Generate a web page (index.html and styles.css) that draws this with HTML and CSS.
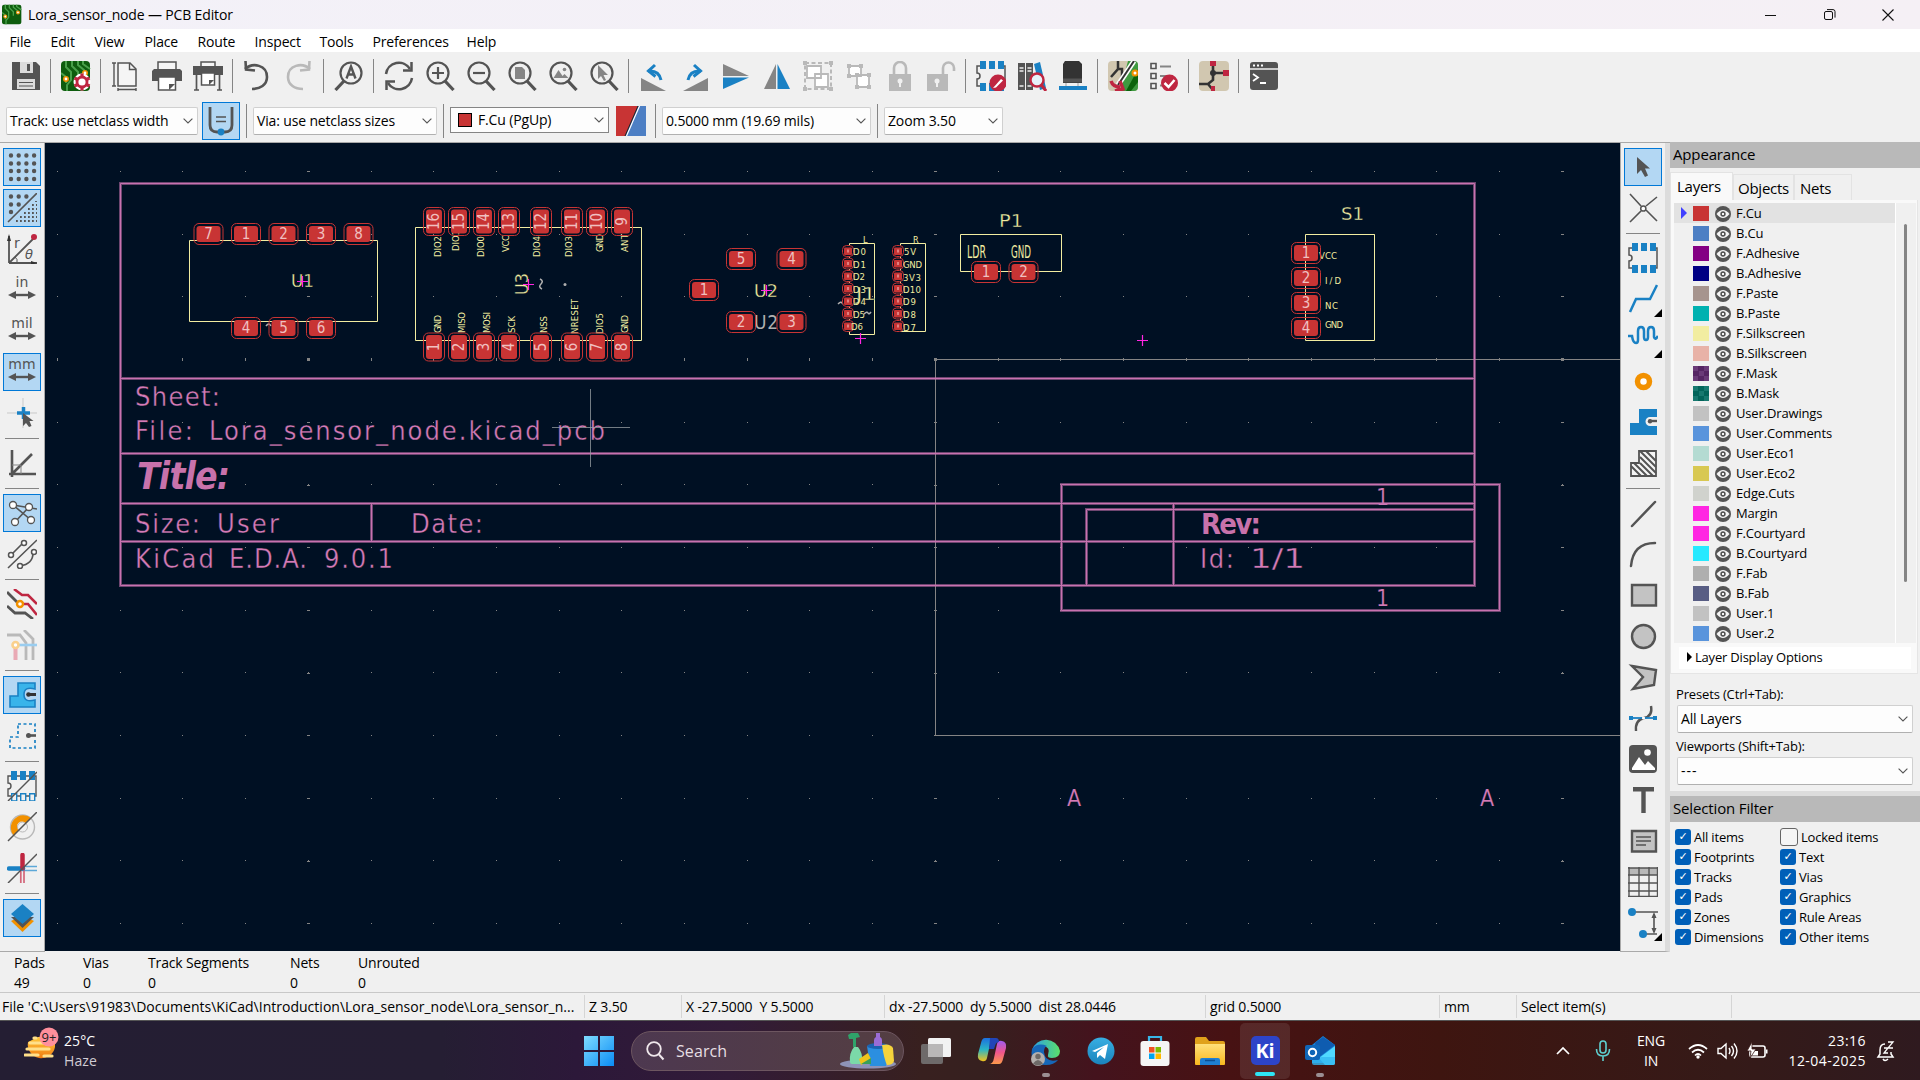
FILE: index.html
```html
<!DOCTYPE html>
<html lang="en">
<head>
<meta charset="utf-8">
<title>Lora_sensor_node — PCB Editor</title>
<link rel="stylesheet" href="styles.css">
</head>
<body>
<svg class="defs" width="0" height="0">
  <defs>
    <linearGradient id="gwin" x1="0" y1="0" x2="1" y2="1"><stop offset="0" stop-color="#7fdcff"/><stop offset="1" stop-color="#0a8cf5"/></linearGradient>
    <linearGradient id="gcop1" x1="0" y1="0" x2="0" y2="1"><stop offset="0" stop-color="#1c6fe0"/><stop offset=".5" stop-color="#2bb6c4"/><stop offset="1" stop-color="#f3c21b"/></linearGradient>
    <linearGradient id="gcop2" x1="0" y1="0" x2="0" y2="1"><stop offset="0" stop-color="#a05bf0"/><stop offset=".5" stop-color="#f0568c"/><stop offset="1" stop-color="#fb9a4b"/></linearGradient>
    <linearGradient id="gedge" x1="0" y1="0" x2="1" y2="0"><stop offset="0" stop-color="#2b9fe8"/><stop offset="1" stop-color="#5be06a"/></linearGradient>
    <linearGradient id="gtel" x1="0" y1="0" x2="0" y2="1"><stop offset="0" stop-color="#37aee2"/><stop offset="1" stop-color="#1b84bd"/></linearGradient>
    <linearGradient id="gfold" x1="0" y1="0" x2="0" y2="1"><stop offset="0" stop-color="#ffe07a"/><stop offset="1" stop-color="#f9b81e"/></linearGradient>
    <linearGradient id="ghaze" x1="0" y1="0" x2="0" y2="1"><stop offset="0" stop-color="#ffc93c"/><stop offset="1" stop-color="#f07c12"/></linearGradient>
    <symbol id="eye" viewBox="0 0 16 16"><circle cx="8" cy="8" r="8" fill="#545454"/><path d="M1.500 8Q8 0 14.500 8Q8 16 1.500 8Z" fill="#f4f4f4"/><circle cx="8" cy="8" r="2.700" fill="#545454"/><rect x="7" y="7" width="2" height="2" fill="#f4f4f4"/></symbol>
    <symbol id="chev" viewBox="0 0 10 6"><path d="M.6.6 5 5 9.400.6" fill="none" stroke="#555" stroke-width="1.1"/></symbol>
    <symbol id="board" viewBox="0 0 30 30"><rect width="29" height="30" rx="4" fill="#0e5c0e"/><path d="M5 0v6l5 5v8l-4 5v6M11 0v5l6 6v6M17 0v4l6 5v4M0 12l5 4v6M22 0v3l7 5" fill="none" stroke="#49a04a" stroke-width="2"/><circle cx="5" cy="18" r="2.2" fill="#fff" stroke="#f29100" stroke-width="1.6"/><circle cx="24" cy="12" r="2.2" fill="#fff" stroke="#f29100" stroke-width="1.6"/></symbol>
    <symbol id="lens" viewBox="0 0 30 30"><circle cx="13" cy="12" r="10.500" fill="none" stroke="#545454" stroke-width="2.200"/><path d="M20 20l8.500 9" stroke="#545454" stroke-width="3.200"/></symbol>
    <symbol id="dip" viewBox="0 0 30 30"><path d="M4 5H1v7a3 3 0 0 1 0 6v7h3M27 5h2v20h-2" fill="none" stroke="#545454" stroke-width="1.500"/><path d="M4 0h6v8H4zM13 0h6v8h-6zM22 0h6v8h-6zM4 22h6v8H4zM13 22h6v8h-6zM22 22h6v8h-6z" fill="#1a81c4"/></symbol>
    <symbol id="arrows" viewBox="0 0 30 8"><path d="M5 4h20" stroke="#545454" stroke-width="2.400"/><path d="M1 4l8-4v8zM29 4l-8-4v8z" fill="#545454"/></symbol>
    <symbol id="padh" viewBox="-16 -12 32 24" overflow="visible"><rect x="-14.500" y="-10.500" width="29" height="21" rx="5" fill="none" stroke="#c83434"/><rect x="-12" y="-8" width="24" height="16" rx="3" fill="#c83434"/></symbol>
    <symbol id="padv" viewBox="-12 -16 24 32" overflow="visible"><rect x="-10.500" y="-14" width="21" height="28" rx="5" fill="none" stroke="#c83434"/><rect x="-8" y="-12" width="16" height="24" rx="3" fill="#c83434"/></symbol>
    <symbol id="pads" viewBox="-6 -6 12 12" overflow="visible"><rect x="-5.500" y="-5.500" width="11" height="11" rx="4" fill="#001023" stroke="#c83434"/><rect x="-4" y="-3.500" width="8" height="7.500" rx="1" fill="#c83434"/><rect x="-1" y="-1.500" width="2" height="3" fill="#e08080"/></symbol>
    <symbol id="cross" viewBox="-6 -6 12 12" overflow="visible"><path d="M-5.500 0h11M0-5.500v11" stroke="#ff26e2" stroke-width="1.200"/></symbol>
  </defs>
</svg>

<header class="titlebar">
  <svg class="appicon" viewBox="0 0 30 30" width="20" height="21"><use href="#board" width="30" height="30"/></svg>
  <span class="apptitle">Lora_sensor_node — PCB Editor</span>
  <div class="winbtns">
    <svg width="12" height="12"><path d="M0 6.500h11" stroke="#111"/></svg>
    <svg width="12" height="12"><rect x=".5" y="2.500" width="8" height="8" rx="1.500" fill="none" stroke="#111"/><path d="M3 .6h6a2 2 0 0 1 2 2v6" fill="none" stroke="#111"/></svg>
    <svg width="12" height="12"><path d="M.5.5l11 11M11.500.5l-11 11" stroke="#111" stroke-width="1.100"/></svg>
  </div>
</header>
<nav class="menubar"><span>File</span><span>Edit</span><span>View</span><span>Place</span><span>Route</span><span>Inspect</span><span>Tools</span><span>Preferences</span><span>Help</span></nav>

<div class="toolbar main">
  <b><svg viewBox="0 0 30 30"><path d="M1 1h24l4 4v24H1z" fill="#545454"/><path d="M9 1h13v11H9z" fill="#dcdcdc"/><path d="M16 3h3v7h-3z" fill="#545454"/><path d="M6 18h18v10H6z" fill="#dcdcdc"/><path d="M8 21.500h14M8 25h14" stroke="#545454" stroke-width="1.200"/></svg></b><i></i>
  <b><svg viewBox="0 0 30 30"><use href="#board"/><circle cx="21" cy="21" r="8.500" fill="#fff"/><circle cx="21" cy="21" r="5" fill="#fff" stroke="#bf2641" stroke-width="2.800"/><path d="M21 12.500v3M21 26.500v3M13.500 17l3 1.500M25.500 23.500l3 1.500M13.500 25l3-1.500M25.500 18.500l3-1.500" stroke="#bf2641" stroke-width="3.200"/></svg></b><i></i>
  <b><svg viewBox="0 0 30 30"><path d="M7 2h12l6 6v17H7z" fill="#f5f5f5" stroke="#545454" stroke-width="1.500"/><path d="M18.500 2v6.500H25M1 2h4M1 25h4M3 2v23M7 28.500h18M7 27v3M25 27v3" fill="none" stroke="#545454" stroke-width="1.400"/></svg></b>
  <b><svg viewBox="0 0 30 30"><path d="M6 1h18v8H6z" fill="#f5f5f5" stroke="#545454" stroke-width="1.500"/><path d="M2 8h26l2 2v10h-6v-4H6v4H0V10z" fill="#545454"/><path d="M6.500 16h17v13h-17z" fill="#fff" stroke="#545454" stroke-width="1.500"/><path d="M17 29v-6h6z" fill="#545454"/></svg></b>
  <b><svg viewBox="0 0 30 30"><path d="M8 1h14v5H8z" fill="#f5f5f5" stroke="#545454" stroke-width="1.500"/><path d="M0 5h30v9H0z" fill="#545454"/><path d="M3.500 14v15M26.500 14v15M1 29h5M24 29h5" stroke="#545454" stroke-width="1.700"/><path d="M8.500 12h13v12h-13z" fill="#fff" stroke="#545454" stroke-width="1.500"/><path d="M16 24v-5h5z" fill="#545454"/></svg></b><i></i>
  <b><svg viewBox="0 0 30 30"><path d="M2 8C10 1 24 4 24 16 24 24 17 28 9 28" fill="none" stroke="#545454" stroke-width="2.600"/><path d="M2.500 0l.5 8.500 9 1" fill="none" stroke="#545454" stroke-width="2.600"/></svg></b>
  <b><svg viewBox="0 0 30 30"><g transform="matrix(-1 0 0 1 28 0)"><path d="M2 8C10 1 24 4 24 16 24 24 17 28 9 28" fill="none" stroke="#b9b9b9" stroke-width="2.600"/><path d="M2.500 0l.5 8.500 9 1" fill="none" stroke="#b9b9b9" stroke-width="2.600"/></g></svg></b><i></i>
  <b><svg viewBox="0 0 30 30"><g transform="matrix(-1 0 0 1 30 0)"><use href="#lens"/></g><path d="M12.500 17.500l4.500-12 4.500 12M14 13.500h6" fill="none" stroke="#545454" stroke-width="2.400"/></svg></b><i></i>
  <b><svg viewBox="0 0 30 30"><path d="M2 13A13 13 0 0 1 26 8M28 17A13 13 0 0 1 4 22" fill="none" stroke="#545454" stroke-width="2.500"/><path d="M27.500 1v8.500h-8.500M2.500 29v-8.500h8.500" fill="none" stroke="#545454" stroke-width="2.500"/></svg></b>
  <b><svg viewBox="0 0 30 30"><use href="#lens"/><path d="M7 12h12M13 6v12" stroke="#545454" stroke-width="2.200"/></svg></b>
  <b><svg viewBox="0 0 30 30"><use href="#lens"/><path d="M7 12h12" stroke="#545454" stroke-width="2.200"/></svg></b>
  <b><svg viewBox="0 0 30 30"><use href="#lens"/><path d="M8 6h7l3 3v9H8z" fill="#858585"/></svg></b>
  <b><svg viewBox="0 0 30 30"><use href="#lens"/><path d="M5.500 17l5-8 4 6 2-2 4 4z" fill="#858585"/><circle cx="16.500" cy="8.500" r="1.800" fill="#858585"/></svg></b>
  <b><svg viewBox="0 0 30 30"><use href="#lens"/><path d="M9 4v14l3-3 3 5 2-1-2.500-5H19z" fill="#858585"/></svg></b><i></i>
  <b><svg viewBox="0 0 30 30"><path d="M2 17v13h25z" fill="#858585"/><path d="M9 10q11-1 13 9" fill="none" stroke="#1a81c4" stroke-width="3"/><path d="M16 4L9.500 10l7 5.500" fill="none" stroke="#1a81c4" stroke-width="3"/></svg></b>
  <b><svg viewBox="0 0 30 30"><path d="M28 17v13H3z" fill="#858585"/><path d="M21 10q-11-1-13 9" fill="none" stroke="#1a81c4" stroke-width="3"/><path d="M14 4l6.500 6-7 5.500" fill="none" stroke="#1a81c4" stroke-width="3"/></svg></b>
  <b><svg viewBox="0 0 30 30"><path d="M2 3l26 12H2z" fill="#858585"/><path d="M2 28l26-11.500H2z" fill="#1a81c4"/></svg></b>
  <b><svg viewBox="0 0 30 30"><path d="M2 28L14 3v25z" fill="#858585"/><path d="M28 28L15.500 3v25z" fill="#1a81c4"/></svg></b>
  <b><svg viewBox="0 0 30 30"><path d="M2 2h26v26H2z" fill="none" stroke="#b9b9b9" stroke-width="2" stroke-dasharray="4 2.500"/><path d="M4 5h14v12H4zM12 13h13v13H12z" fill="#fff" stroke="#b9b9b9" stroke-width="1.800"/><path d="M0 0h4v4H0zM26 0h4v4h-4zM0 26h4v4H0zM26 26h4v4h-4z" fill="#b9b9b9"/></svg></b>
  <b><svg viewBox="0 0 30 30"><path d="M5 5h12v10H5zM13 14h12v12H13z" fill="#fff" stroke="#b9b9b9" stroke-width="1.800"/><path d="M3 3h4v4H3zM15 3h4v4h-4zM3 13h4v4H3zM11 12h4v4h-4zM23 12h4v4h-4zM11 24h4v4h-4zM23 24h4v4h-4z" fill="#b9b9b9"/></svg></b>
  <b><svg viewBox="0 0 30 30"><path d="M9 14V7a6 6 0 0 1 12 0v7" fill="none" stroke="#b9b9b9" stroke-width="2.600"/><path d="M4 13h22v17H4z" fill="#b9b9b9"/><circle cx="15" cy="20" r="2.500" fill="#f0f0f0"/><path d="M14 21h2v5h-2z" fill="#f0f0f0"/></svg></b>
  <b><svg viewBox="0 0 30 30"><path d="M17 14V7a5.500 5.500 0 0 1 11 0v3" fill="none" stroke="#b9b9b9" stroke-width="2.600"/><path d="M1 13h21v17H1z" fill="#b9b9b9"/><circle cx="11" cy="20" r="2.500" fill="#f0f0f0"/><path d="M10 21h2v5h-2z" fill="#f0f0f0"/></svg></b><i></i>
  <b><svg viewBox="0 0 30 30"><use href="#dip"/><circle cx="22" cy="22" r="8.500" fill="#bf2641"/><path d="M17 27l8-9 2 1.500-7 7z" fill="#fff"/></svg></b>
  <b><svg viewBox="0 0 30 30"><path d="M1 2h7v27H1zM9 2h7v27H9z" fill="#545454"/><path d="M2.500 7h4M2.500 10h4M10.500 7h4M10.500 10h4M2.500 25h4M10.500 25h4" stroke="#eee" stroke-width="1.300"/><path d="M17 3l6-2 6 26-6 2z" fill="#1a81c4"/><circle cx="20" cy="19" r="6.500" fill="#e6f2fa" stroke="#bf2641" stroke-width="2.400"/><path d="M24.500 24l4.500 6" stroke="#bf2641" stroke-width="3"/></svg></b>
  <b><svg viewBox="0 0 30 30"><path d="M7 0h14l3 3v19H5V3z" fill="#333"/><path d="M8 22v3M20 22v3" stroke="#bbb" stroke-width="1.500"/><path d="M5 17.500h19v4H5z" fill="#545454"/><path d="M1 25h28v4H1z" fill="#1a81c4"/></svg></b><i></i>
  <b><svg viewBox="0 0 30 30"><rect width="30" height="30" rx="4" fill="#d1c7b0"/><path d="M20 0h6a4 4 0 0 1 4 4v22a4 4 0 0 1-4 4H12z" fill="#3f9a40"/><path d="M30 8L18 30h5l7-9z" fill="#0b630b"/><path d="M10 0v8l-7 8M10 8h4v8" fill="none" stroke="#333" stroke-width="2.500"/><path d="M26 0L10 24" stroke="#fff" stroke-width="5"/><path d="M26 0L10 24" stroke="#333" stroke-width="2"/><path d="M3 20q2 6 9 6M7 30l8-2-3-8" fill="none" stroke="#bf2641" stroke-width="3.500"/><circle cx="27" cy="12" r="2.500" fill="#fff" stroke="#f29100" stroke-width="2"/></svg></b>
  <b><svg viewBox="0 0 30 30"><path d="M2 2.500h5v5H2zM2 12.500h5v5H2zM2 22.500h5v5H2z" fill="none" stroke="#545454" stroke-width="1.600"/><path d="M11 5.500h11M11 15h9M11 24.500h4" stroke="#858585" stroke-width="2"/><circle cx="20.500" cy="22" r="8.500" fill="#bf2641"/><path d="M15.500 22l4 4 6-7" fill="none" stroke="#fff" stroke-width="2.500"/></svg></b><i></i>
  <b><svg viewBox="0 0 30 30"><rect width="30" height="30" rx="4" fill="#d1c7b0"/><path d="M14 4v8M14 12h10M14 12v7l-5 4H0M9 23l5 6" fill="none" stroke="#333" stroke-width="2.600"/><circle cx="14" cy="12" r="3" fill="#333"/><path d="M11 0h6v5h-6zM24 9h6v6h-6zM12 25h4v5h-4z" fill="#bf2641"/></svg></b><i></i>
  <b><svg viewBox="0 0 30 30"><rect x="1" y="1" width="28" height="28" rx="3" fill="#545454"/><path d="M1 8h28" stroke="#f0f0f0" stroke-width="1.500"/><path d="M4 4.500h2M8 4.500h2M12 4.500h2" stroke="#fff" stroke-width="2"/><path d="M4 13l5 3.500-5 3.500M11 22h6" fill="none" stroke="#fff" stroke-width="1.800"/></svg></b>
</div>

<div class="toolbar aux">
  <div class="combo" style="width:192px">Track: use netclass width<svg><use href="#chev"/></svg></div>
  <div class="toggle"><svg width="30" height="30" viewBox="0 0 30 30"><path d="M4 1v18q0 7 7 7h8q7 0 7-7V1" fill="none" stroke="#545454" stroke-width="2.800"/><path d="M10 11h10M10 15.500h10" stroke="#545454" stroke-width="1.300"/><circle cx="15" cy="26" r="3.400" fill="#1a81c4"/></svg></div><i></i>
  <div class="combo" style="width:184px">Via: use netclass sizes<svg><use href="#chev"/></svg></div><i></i>
  <div class="combo layer" style="width:159px"><span class="sw"></span>F.Cu (PgUp)<svg><use href="#chev"/></svg></div>
  <svg class="pair" width="30" height="30"><path d="M0 0h30v30H0z" fill="#4d7fc4"/><path d="M0 0h22L9 30H0z" fill="#c83434"/><path d="M23.500 0L10.500 30" stroke="#fff" stroke-width="1.200"/><path d="M22 0L9 30" stroke="#222" stroke-width="1"/></svg><i></i>
  <div class="combo" style="width:209px">0.5000 mm (19.69 mils)<svg><use href="#chev"/></svg></div><i></i>
  <div class="combo" style="width:119px">Zoom 3.50<svg><use href="#chev"/></svg></div>
</div>

<main class="work">
  <div class="vbar left">
    <b class="on"><svg viewBox="0 0 30 30"><path d="M4 3.500h24M4 11.500h24M4 19h24M4 27h24" stroke="#545454" stroke-width="4.400" stroke-dasharray="0 7.700" stroke-linecap="round"/></svg></b>
    <b class="on"><svg viewBox="0 0 30 30"><path d="M4 3.500h18M4 11.500h9M4 19h1" stroke="#545454" stroke-width="4.400" stroke-dasharray="0 7.700" stroke-linecap="round"/><path d="M1 29L30 0" stroke="#545454" stroke-width="1.600"/><path d="M29 8v1M25 12h5M21 16h9M17 20h13M13 24h17M9 28h21" stroke="#545454" stroke-width="1.800" stroke-dasharray="1.800 2.200"/></svg></b>
    <b><svg viewBox="0 0 30 30"><path d="M2 29V2M2 29h28M2 29L27 4" fill="none" stroke="#545454" stroke-width="1.800"/><path d="M0 7l2-7 2 7zM24 27l6 2-6 2z" fill="#333"/><circle cx="27" cy="3" r="3" fill="#bf2641"/><text x="7" y="14" class="ic" font-size="14">r</text><text x="18" y="25" class="ic" font-size="13" font-style="italic">θ</text><path d="M8 23q3 2 2 6" fill="none" stroke="#545454"/></svg></b>
    <b><svg viewBox="0 0 30 30"><text x="15" y="12" text-anchor="middle" class="ic" font-size="14">in</text><use href="#arrows" y="16" width="30" height="8"/></svg></b>
    <b><svg viewBox="0 0 30 30"><text x="15" y="12" text-anchor="middle" class="ic" font-size="14">mil</text><use href="#arrows" y="16" width="30" height="8"/></svg></b>
    <b class="on"><svg viewBox="0 0 30 30"><text x="15" y="12" text-anchor="middle" class="ic" font-size="14">mm</text><use href="#arrows" y="16" width="30" height="8"/></svg></b>
    <b><svg viewBox="0 0 30 30"><path d="M0 15h30M16 0v30" stroke="#c9c9c9"/><path d="M10 15h13M16.500 9v12" stroke="#1a81c4" stroke-width="3.500"/><path d="M16 15v13l3-3 3 4 2.500-1-2-5h4z" fill="#545454"/></svg></b><i></i>
    <b><svg viewBox="0 0 30 30"><path d="M5 2v27M2 26h27M5 26L25 6" stroke="#545454" stroke-width="2.600"/><path d="M5 17h9M14 17v9" stroke="#858585"/></svg></b><i></i>
    <b class="on"><svg viewBox="0 0 30 30"><path d="M6 7l24 4M6 7l18 15M22 9L8 24" stroke="#545454" stroke-width="1.600"/><g fill="#fff" stroke="#545454" stroke-width="1.300"><circle cx="6" cy="7" r="3.500"/><circle cx="22" cy="9" r="3.500"/><circle cx="8" cy="24" r="3.500"/><circle cx="24" cy="22" r="3.500"/></g></svg></b>
    <b><svg viewBox="0 0 30 30"><path d="M1 29L30 1M4 16L17 3M13 27q13-2 13-13" fill="none" stroke="#545454" stroke-width="1.600"/><g fill="#fff" stroke="#545454" stroke-width="1.500"><circle cx="4" cy="16" r="2.500"/><circle cx="17" cy="4" r="2.500"/><circle cx="13" cy="27" r="2.500"/><circle cx="27" cy="13" r="2.500"/></g></svg></b><i></i>
    <b><svg viewBox="0 0 30 30"><path d="M0 3l12 12M0 17l8 7h10l8 6" fill="none" stroke="#545454" stroke-width="2.800"/><path d="M7 0l8 6h6l9 9M14 15h7l9 11" fill="none" stroke="#bf2641" stroke-width="2.600"/><circle cx="13" cy="15" r="3" fill="#fff" stroke="#f29100" stroke-width="2.400"/></svg></b>
    <b><svg viewBox="0 0 30 30"><path d="M0 5h13l6 8v17M17 0l9 9v21" fill="none" stroke="#b9b9b9" stroke-width="2.800"/><path d="M10 15h20" stroke="#99cdf0" stroke-width="2.600"/><path d="M8.500 18v12" stroke="#e9a9b4" stroke-width="4"/><circle cx="8.500" cy="15" r="3" fill="#fff" stroke="#fad08c" stroke-width="2.600"/></svg></b><i></i>
    <b class="on"><svg viewBox="0 0 30 30"><path d="M11 3h17v6q-11-3-11 5.500T28 20v7H3V16h8z" fill="#39b4ea" stroke="#1a81c4" stroke-width="1.600"/><path d="M21 14.500h8" stroke="#333" stroke-width="3"/><circle cx="21.500" cy="14.500" r="2.300" fill="#333"/></svg></b>
    <b><svg viewBox="0 0 30 30"><path d="M11 3h17v24H3V16h8z" fill="none" stroke="#1a81c4" stroke-width="1.700" stroke-dasharray="3 2.500"/><path d="M20 11h9v8h-9z" fill="#f0f0f0"/><path d="M21 14.500h8" stroke="#545454" stroke-width="2.600"/><circle cx="21.500" cy="14.500" r="2.500" fill="#545454"/></svg></b><i></i>
    <b><svg viewBox="0 0 30 30"><path d="M4 5H1v7a3 3 0 0 1 0 6v7h28V5H4" fill="none" stroke="#545454" stroke-width="1.400"/><path d="M4 0h6v9H4zM13 0h6v9h-6zM22 0h6v9h-6z" fill="#1a81c4"/><path d="M4.700 22.700h5V30h-5zM13.700 22.700h5V30h-5zM22.700 22.700h5V30h-5z" fill="#f0f0f0" stroke="#1a81c4" stroke-width="1.400"/><path d="M1 30L30 1" stroke="#545454" stroke-width="1.500"/></svg></b>
    <b><svg viewBox="0 0 30 30"><circle cx="15.500" cy="15" r="12" fill="none" stroke="#b9b9b9" stroke-width="1.400"/><circle cx="15.500" cy="15" r="5" fill="none" stroke="#b9b9b9"/><path d="M6.700 23.800a12.500 12.500 0 0 1 17.600-17.600L19 11.500a5 5 0 1 0-7 7z" fill="#f29100"/><path d="M1 29L30 0" stroke="#545454" stroke-width="1.500"/></svg></b>
    <b><svg viewBox="0 0 30 30"><path d="M15 13.500h15M15 17.500h15" stroke="#5ca8d8" stroke-width="1.700"/><path d="M13.800 15v15M17 15v15" stroke="#d3667a" stroke-width="1.700"/><path d="M2 15.500h14" stroke="#1a81c4" stroke-width="4.500" stroke-linecap="round"/><path d="M15.500 2v13" stroke="#bf2641" stroke-width="4.500" stroke-linecap="round"/><path d="M1 30L30 1" stroke="#545454" stroke-width="1.500"/></svg></b><i></i>
    <b class="on"><svg viewBox="0 0 30 30"><path d="M4 18l11.500 11L27 18l-4-2H8z" fill="#f29100"/><path d="M4 14l11.500 11L27 14z" fill="#545454"/><path d="M15.500 1L27 11 15.500 21 4 11z" fill="#1a81c4"/></svg></b>
  </div>

  <svg class="canvas" width="1575" height="808" viewBox="45 143 1575 808">
    <defs>
      <path id="frame" d="M120.500 183.500h1354v402h-1354zM120.500 378.500h1354M120.500 453.500h1354M120.500 503.500h1354M120.500 541.500h1354M371.500 503.500v38M1173.500 503.500v82M1061.500 484.500h438v126h-438zM1086.500 585.500v-76h388"/>
      <path id="gridrow" d="M57 0H1620"/>
    </defs>
    <g class="grid">
      <use href="#gridrow" y="171.500"/><use href="#gridrow" y="234.500"/><use href="#gridrow" y="296.500"/><use href="#gridrow" y="422.500"/><use href="#gridrow" y="484.500"/><use href="#gridrow" y="547.500"/><use href="#gridrow" y="610.500"/><use href="#gridrow" y="672.500"/><use href="#gridrow" y="735.500"/><use href="#gridrow" y="798.500"/><use href="#gridrow" y="860.500"/><use href="#gridrow" y="923.500"/>
      <use href="#gridrow" y="359.500" stroke-width="3"/>
      <path d="M308.500 171V950M935.500 171V950M1562.500 171V950" stroke-width="3"/>
    </g>
    <path d="M307 358h3v3h-3zM934 358h3v3h-3zM1561 358h3v3h-3z" fill="#848484"/>
    <path d="M1620 359.500H935.500v376H1620" class="page"/>

    <g class="ws">
      <text x="135" y="406" textLength="85">Sheet:</text>
      <text x="135" y="440" textLength="58">File:</text><text x="209" y="440" textLength="396">Lora_sensor_node.kicad_pcb</text>
      <text x="137" y="489" textLength="93" class="title">Title:</text>
      <text x="135" y="533" textLength="65">Size:</text><text x="217" y="533" textLength="62">User</text>
      <text x="411" y="533" textLength="72">Date:</text>
      <text x="135" y="568" textLength="79">KiCad</text><text x="229" y="568" textLength="78">E.D.A.</text><text x="324" y="568" textLength="69">9.0.1</text>
      <text x="1201" y="534" textLength="60" class="rev">Rev:</text>
      <text x="1200" y="568" textLength="34">Id:</text><text x="1250" y="568" textLength="55" lengthAdjust="spacingAndGlyphs">1/1</text>
      <text x="1376" y="505" class="sm">1</text><text x="1376" y="606" class="sm">1</text>
      <text x="1067" y="806" class="sm">A</text><text x="1480" y="806" class="sm">A</text>
    </g>
    <use href="#frame" class="fr halo"/><use href="#frame" class="fr"/>

    <path class="silk" d="M189.500 240.500h188v81h-188zM415.500 227.500h226v113h-226zM849.500 243.500h25v91h-25zM900.500 243.500h25v88h-25zM960.500 234.500h101v37h-101zM1305.500 234.500h69v106h-69z"/>

    <g class="lbl">
      <g transform="rotate(-90)">
        <text x="-257" y="441" textLength="21">DIO2</text><text x="-251" y="459" textLength="21">DIO1</text><text x="-257" y="484" textLength="21">DIO0</text><text x="-252" y="509" textLength="17">VCC</text><text x="-257" y="540" textLength="21">DIO4</text><text x="-257" y="572" textLength="21">DIO3</text><text x="-252" y="603" textLength="18">GND</text><text x="-252" y="628" textLength="18">ANT</text>
        <text x="-333" y="441" textLength="18">GND</text><text x="-333" y="465" textLength="21">MISO</text><text x="-333" y="490" textLength="21">MOSI</text><text x="-333" y="515" textLength="17">SCK</text><text x="-333" y="547" textLength="17">NSS</text><text x="-334" y="578" textLength="35">NRESET</text><text x="-334" y="603" textLength="21">DIO5</text><text x="-333" y="628" textLength="18">GND</text>
      </g>
      <text x="967" y="258" textLength="19" lengthAdjust="spacingAndGlyphs" font-size="18">LDR</text><text x="1011" y="258" textLength="20" lengthAdjust="spacingAndGlyphs" font-size="18">GND</text>
      <text x="1319" y="259" textLength="18">VCC</text><text x="1325" y="284" textLength="16">I/D</text><text x="1325" y="309" textLength="13">NC</text><text x="1325" y="328" textLength="18">GND</text>
      <text x="863" y="243" font-size="9">L</text><text x="913" y="243" font-size="9">R</text>
    </g>
    <g class="ref">
      <text x="291" y="286.500" textLength="23" lengthAdjust="spacingAndGlyphs">U1</text>
      <text x="-295" y="528" textLength="22" lengthAdjust="spacingAndGlyphs" transform="rotate(-90)">U3</text>
      <text x="754" y="297" textLength="24" lengthAdjust="spacingAndGlyphs">U2</text>
      <text x="856" y="300" textLength="20" lengthAdjust="spacingAndGlyphs">J1</text>
      <text x="999" y="226.500" textLength="24" lengthAdjust="spacingAndGlyphs">P1</text>
      <text x="1341" y="220" textLength="23" lengthAdjust="spacingAndGlyphs">S1</text>
    </g>
    <g class="fab"><text x="754" y="328.500" textLength="24">U2</text><path d="M266 326q3-4 5 0M838 304q3-3 4-1t3-1M864 314q3-3 4-1t3-1M540 279q4 2 1 5t1 5" fill="none" stroke="#afafaf" stroke-width="1.500"/><circle cx="565" cy="284.500" r="1.500"/></g>

    <g>
      <use href="#padh" x="192.500" y="222" width="32" height="24"/><use href="#padh" x="230" y="222" width="32" height="24"/><use href="#padh" x="267.500" y="222" width="32" height="24"/><use href="#padh" x="305" y="222" width="32" height="24"/><use href="#padh" x="342.500" y="222" width="32" height="24"/>
      <use href="#padh" x="230" y="316" width="32" height="24"/><use href="#padh" x="267.500" y="316" width="32" height="24"/><use href="#padh" x="305" y="316" width="32" height="24"/>
      <use href="#padv" x="422" y="205.500" width="24" height="32"/><use href="#padv" x="447" y="205.500" width="24" height="32"/><use href="#padv" x="472" y="205.500" width="24" height="32"/><use href="#padv" x="497" y="205.500" width="24" height="32"/><use href="#padv" x="529" y="205.500" width="24" height="32"/><use href="#padv" x="560" y="205.500" width="24" height="32"/><use href="#padv" x="585" y="205.500" width="24" height="32"/><use href="#padv" x="610" y="205.500" width="24" height="32"/>
      <use href="#padv" x="422" y="331" width="24" height="32"/><use href="#padv" x="447" y="331" width="24" height="32"/><use href="#padv" x="472" y="331" width="24" height="32"/><use href="#padv" x="497" y="331" width="24" height="32"/><use href="#padv" x="529" y="331" width="24" height="32"/><use href="#padv" x="560" y="331" width="24" height="32"/><use href="#padv" x="585" y="331" width="24" height="32"/><use href="#padv" x="610" y="331" width="24" height="32"/>
      <use href="#padh" x="725" y="247" width="32" height="24"/><use href="#padh" x="775.500" y="247" width="32" height="24"/><use href="#padh" x="688" y="278" width="32" height="24"/><use href="#padh" x="725" y="310" width="32" height="24"/><use href="#padh" x="775.500" y="310" width="32" height="24"/>
      <use href="#padh" x="970" y="260" width="32" height="24"/><use href="#padh" x="1007.500" y="260" width="32" height="24"/>
      <use href="#padh" x="1290" y="241" width="32" height="24"/><use href="#padh" x="1290" y="266" width="32" height="24"/><use href="#padh" x="1290" y="291" width="32" height="24"/><use href="#padh" x="1290" y="316" width="32" height="24"/>
      <use href="#pads" x="842" y="245" width="12" height="12"/><use href="#pads" x="842" y="257.500" width="12" height="12"/><use href="#pads" x="842" y="270" width="12" height="12"/><use href="#pads" x="842" y="282.500" width="12" height="12"/><use href="#pads" x="842" y="295" width="12" height="12"/><use href="#pads" x="842" y="307.500" width="12" height="12"/><use href="#pads" x="842" y="320" width="12" height="12"/>
      <use href="#pads" x="892" y="245" width="12" height="12"/><use href="#pads" x="892" y="257.500" width="12" height="12"/><use href="#pads" x="892" y="270" width="12" height="12"/><use href="#pads" x="892" y="282.500" width="12" height="12"/><use href="#pads" x="892" y="295" width="12" height="12"/><use href="#pads" x="892" y="307.500" width="12" height="12"/><use href="#pads" x="892" y="320" width="12" height="12"/>
    </g>
    <g class="lbl pin">
      <text x="853" y="255" textLength="13">D0</text><text x="853" y="267.500" textLength="13">D1</text><text x="853" y="279.500" textLength="12">D2</text><text x="853" y="293" textLength="13">D3</text><text x="853" y="304.500" textLength="13">D4</text><text x="853" y="318" textLength="12">D5</text><text x="851" y="329.500" textLength="12">D6</text>
      <text x="904" y="255" textLength="12">5V</text><text x="903" y="267.500" textLength="19">GND</text><text x="903" y="280.500" textLength="18">3V3</text><text x="903" y="292.500" textLength="18">D10</text><text x="903" y="305" textLength="13">D9</text><text x="903" y="318" textLength="13">D8</text><text x="903" y="331" textLength="13">D7</text>
    </g>
    <g class="num">
      <text x="208.500" y="238.500">7</text><text x="246" y="238.500">1</text><text x="283.500" y="238.500">2</text><text x="321" y="238.500">3</text><text x="358.500" y="238.500">8</text>
      <text x="246" y="333">4</text><text x="283.500" y="333">5</text><text x="321" y="333">6</text>
      <text x="741" y="263.500">5</text><text x="791.500" y="263.500">4</text><text x="704" y="295">1</text><text x="741" y="326.500">2</text><text x="791.500" y="326.500">3</text>
      <text x="986" y="276.500">1</text><text x="1023.500" y="276.500">2</text>
      <text x="1306" y="257.500">1</text><text x="1306" y="282.500">2</text><text x="1306" y="308">3</text><text x="1306" y="333">4</text>
      <g transform="rotate(-90)">
        <text x="-221.500" y="439">16</text><text x="-221.500" y="464">15</text><text x="-221.500" y="489">14</text><text x="-221.500" y="514">13</text><text x="-221.500" y="546">12</text><text x="-221.500" y="577">11</text><text x="-221.500" y="602">10</text><text x="-221.500" y="627">9</text>
        <text x="-347" y="439">1</text><text x="-347" y="464">2</text><text x="-347" y="489">3</text><text x="-347" y="514">4</text><text x="-347" y="546">5</text><text x="-347" y="577">6</text><text x="-347" y="602">7</text><text x="-347" y="627">8</text>
      </g>
    </g>
    <use href="#cross" x="296.500" y="275.500" width="12" height="12"/><use href="#cross" x="522.500" y="278.500" width="12" height="12"/><use href="#cross" x="760.500" y="284.500" width="12" height="12"/><use href="#cross" x="854.500" y="332.500" width="12" height="12"/><use href="#cross" x="1136.500" y="334.500" width="12" height="12"/>
    <path d="M590.500 389v78M552 427.500h78" stroke="#9aa0a6" stroke-opacity=".75"/>
  </svg>

  <div class="vbar right">
    <b class="on"><svg viewBox="0 0 30 30"><path d="M9 5v17l4-4 4 7 3-1.500-3-7h5z" fill="#545454"/></svg></b>
    <b><svg viewBox="0 0 30 30"><path d="M2 1l11 12M29 4L18 13M2 29l11-11M29 28L18 17" stroke="#545454" stroke-width="1.600"/><circle cx="15.300" cy="15.500" r="2.600" fill="#fff" stroke="#545454" stroke-width="1.500"/></svg></b><i></i>
    <b><svg viewBox="0 0 30 30"><use href="#dip"/></svg></b>
    <b class="more"><svg viewBox="0 0 30 30"><path d="M2 28L8 15h14L29 1" fill="none" stroke="#1a81c4" stroke-width="2.500"/></svg></b>
    <b class="more"><svg viewBox="0 0 30 30"><path d="M0 11h4q1 7 4 7 2 0 2-3V6q0-4 3-4t3 4v6q0 3 2 3t2-3V6q0-4 3-4t3 4v6q1 4 4-1" fill="none" stroke="#1a81c4" stroke-width="2.500"/></svg></b>
    <b><svg viewBox="0 0 30 30"><circle cx="15.500" cy="15.500" r="6" fill="#fff" stroke="#f29100" stroke-width="5.500"/></svg></b>
    <b><svg viewBox="0 0 30 30"><path d="M11 2h18v8h-7a4.500 4.500 0 0 0 0 9h7v9H2V16h9z" fill="#1a81c4"/><path d="M21 14h8" stroke="#545454" stroke-width="2.400"/><circle cx="22" cy="14.300" r="2.200" fill="#545454"/></svg></b>
    <b><svg viewBox="0 0 30 30"><path d="M11 3h17v25H3V15h8z" fill="#f5f5f5" stroke="#545454" stroke-width="1.800"/><path d="M12 3l16 16M12 9l16 16M18 3l10 10M12 15l13 13M6 15l13 13M3 18l10 10" stroke="#545454" stroke-width="2"/></svg></b><i></i>
    <b><svg viewBox="0 0 30 30"><path d="M4 28L27 4" stroke="#545454" stroke-width="2.500" stroke-linecap="round"/></svg></b>
    <b><svg viewBox="0 0 30 30"><path d="M3 27Q5 4 27 4" fill="none" stroke="#545454" stroke-width="2.500" stroke-linecap="round"/></svg></b>
    <b><svg viewBox="0 0 30 30"><path d="M4 5h24v20.500H4z" fill="#c3c3c3" stroke="#545454" stroke-width="2.400"/></svg></b>
    <b><svg viewBox="0 0 30 30"><circle cx="15.500" cy="15.500" r="11.500" fill="#c3c3c3" stroke="#545454" stroke-width="2.400"/></svg></b>
    <b><svg viewBox="0 0 30 30"><path d="M4 4l24 4-2 15-21 4 10-12z" fill="#c3c3c3" stroke="#545454" stroke-width="2.400"/></svg></b>
    <b><svg viewBox="0 0 30 30"><path d="M23 3q2 10-7 12-9 2-8 13" fill="none" stroke="#545454" stroke-width="2.400"/><path d="M2 15h26" stroke="#1a81c4" stroke-width="1.800"/><path d="M1 13h4v4H1zM25 13h4v4h-4z" fill="#1a81c4"/><circle cx="15.500" cy="15" r="1.600" fill="#fff"/></svg></b>
    <b><svg viewBox="0 0 30 30"><rect x="1" y="1" width="28" height="28" rx="4" fill="#545454"/><path d="M4 24L11 13l6 8 3-4 7 7v2H4z" fill="#fff"/><circle cx="19.500" cy="8.500" r="3.300" fill="#fff"/></svg></b>
    <b><svg viewBox="0 0 30 30"><path d="M5 2h21v4.500h-8.300V28h-4.400V6.500H5z" fill="#545454"/></svg></b>
    <b><svg viewBox="0 0 30 30"><path d="M4 5h24v20.500H4z" fill="#c3c3c3" stroke="#545454" stroke-width="2.400"/><path d="M8 11h15M8 15h15M8 19h10" stroke="#545454" stroke-width="1.700"/></svg></b>
    <b><svg viewBox="0 0 30 30"><path d="M1 1h29v7H1z" fill="#b9b9b9"/><path d="M1 0v30M11 0v30M21 0v30M29.500 0v30M0 1h30M0 8h30M0 16h30M0 24h30M0 29.500h30" stroke="#545454" stroke-width="1.400"/></svg></b>
    <b class="more"><svg viewBox="0 0 30 30"><path d="M4 4h26M15 26h14M26 6v18" stroke="#545454" stroke-width="1.600"/><path d="M26 4l-2.500 6h5zM26 26l-2.500-6h5z" fill="#545454"/><circle cx="4" cy="4" r="4" fill="#1a81c4"/><circle cx="15" cy="26" r="4" fill="#1a81c4"/></svg></b>
  </div>

  <aside class="panel">
    <h2>Appearance</h2>
    <div class="tabs"><span class="act">Layers</span><span>Objects</span><span>Nets</span></div>
    <div class="tabbody">
      <div class="layers">
        <ul>
          <li class="sel"><s style="background:#c83434"></s><svg><use href="#eye"/></svg>F.Cu</li>
          <li><s style="background:#4d7fc4"></s><svg><use href="#eye"/></svg>B.Cu</li>
          <li><s style="background:#840084"></s><svg><use href="#eye"/></svg>F.Adhesive</li>
          <li><s style="background:#000084"></s><svg><use href="#eye"/></svg>B.Adhesive</li>
          <li><s style="background:#a6948e"></s><svg><use href="#eye"/></svg>F.Paste</li>
          <li><s style="background:#00b1b0"></s><svg><use href="#eye"/></svg>B.Paste</li>
          <li><s style="background:#f2eda1"></s><svg><use href="#eye"/></svg>F.Silkscreen</li>
          <li><s style="background:#e8b2a7"></s><svg><use href="#eye"/></svg>B.Silkscreen</li>
          <li><s class="chk" style="background-color:#6a3a78;color:#552563"></s><svg><use href="#eye"/></svg>F.Mask</li>
          <li><s class="chk" style="background-color:#17786f;color:#02645a"></s><svg><use href="#eye"/></svg>B.Mask</li>
          <li><s style="background:#c2c2c2"></s><svg><use href="#eye"/></svg>User.Drawings</li>
          <li><s style="background:#5994dc"></s><svg><use href="#eye"/></svg>User.Comments</li>
          <li><s style="background:#b4dbd2"></s><svg><use href="#eye"/></svg>User.Eco1</li>
          <li><s style="background:#d8c852"></s><svg><use href="#eye"/></svg>User.Eco2</li>
          <li><s style="background:#d0d2cd"></s><svg><use href="#eye"/></svg>Edge.Cuts</li>
          <li><s style="background:#ff26e2"></s><svg><use href="#eye"/></svg>Margin</li>
          <li><s style="background:#ff26e2"></s><svg><use href="#eye"/></svg>F.Courtyard</li>
          <li><s style="background:#26e9ff"></s><svg><use href="#eye"/></svg>B.Courtyard</li>
          <li><s style="background:#afafaf"></s><svg><use href="#eye"/></svg>F.Fab</li>
          <li><s style="background:#585d84"></s><svg><use href="#eye"/></svg>B.Fab</li>
          <li><s style="background:#c2c2c2"></s><svg><use href="#eye"/></svg>User.1</li>
          <li><s style="background:#5994dc"></s><svg><use href="#eye"/></svg>User.2</li>
        </ul>
        <div class="scroll"><em></em></div>
      </div>
      <div class="ldo"><svg width="5" height="10"><path d="M0 0l5 5-5 5z"/></svg>Layer Display Options</div>
    </div>
    <label>Presets (Ctrl+Tab):</label>
    <div class="combo wide">All Layers<svg><use href="#chev"/></svg></div>
    <label class="vp">Viewports (Shift+Tab):</label>
    <div class="combo wide dash">---<svg><use href="#chev"/></svg></div>
    <h2 class="sf">Selection Filter</h2>
    <div class="checks">
      <span>All items</span><span class="off">Locked items</span><span>Footprints</span><span>Text</span><span>Tracks</span><span>Vias</span><span>Pads</span><span>Graphics</span><span>Zones</span><span>Rule Areas</span><span>Dimensions</span><span>Other items</span>
    </div>
  </aside>
</main>

<section class="info"><div>Pads<br>49</div><div>Vias<br>0</div><div>Track Segments<br>0</div><div>Nets<br>0</div><div>Unrouted<br>0</div></section>
<footer class="status"><span class="path">File 'C:\Users\91983\Documents\KiCad\Introduction\Lora_sensor_node\Lora_sensor_n...</span><span>Z 3.50</span><span>X -27.5000&nbsp; Y 5.5000</span><span>dx -27.5000&nbsp; dy 5.5000&nbsp; dist 28.0446</span><span>grid 0.5000</span><span>mm</span><span>Select item(s)</span><span></span></footer>

<div class="taskbar">
  <div class="weather">
    <svg width="40" height="40" viewBox="0 0 40 40"><path d="M4 15a13.500 13.500 0 0 0 27 5V10H14z" fill="url(#ghaze)"/><path d="M6 16h16M3 22h22M1 28h13M10 11h2M20 29h8" stroke="#ffe08a" stroke-width="3.200" stroke-linecap="round"/><circle cx="25" cy="10" r="9.500" fill="#ff8f9c"/><text x="25" y="14.500" text-anchor="middle" class="badge">9+</text></svg>
    <div>25°C<br><span>Haze</span></div>
  </div>
  <div class="apps">
    <svg class="a1" width="30" height="30"><path d="M0 0h14v14H0zM16 0h14v14H16zM0 16h14v14H0zM16 16h14v14H16z" fill="url(#gwin)"/></svg>
    <div class="search"><svg width="20" height="22" viewBox="0 0 20 22"><circle cx="9" cy="9" r="6.800" fill="none" stroke="#f0e8ec" stroke-width="1.800"/><path d="M14 14.500l4.500 5" stroke="#f0e8ec" stroke-width="2"/></svg>Search
      <svg class="broom" width="60" height="38" viewBox="0 0 60 38"><ellipse cx="29" cy="32" rx="28" ry="4.500" fill="#8e93b8"/><path d="M15 15q-5 6-4 15 0 2 2 2h8q2 0 2-2 1-9-4-15z" fill="#7bd9a8"/><path d="M9 3l3-2h7l2 4-4 1v9h-3V7h-4z" fill="#2fa36a"/><path d="M28 14h22l-3 20H31z" fill="#2b8fe0"/><ellipse cx="39" cy="14" rx="11" ry="3" fill="#1b62b0"/><path d="M35 8q0-2 2-3V1h4v4q2 1 2 3v6h-8z" fill="#9a6cd6"/><path d="M43 13q8-2 11 3l1 13q-1 4-7 4-3-6-5-20z" fill="#f5d33c"/><path d="M20 27l9-6 3 6-10 6z" fill="#f0c41c"/><path d="M22 32l10-6v6z" fill="#3aa05a"/></svg></div>
    <svg class="a2" width="32" height="28"><rect y="7" width="22" height="20" rx="2" fill="#6e6a6a"/><rect x="7" y="1" width="23" height="19" rx="1.500" fill="#f2f2f2"/><path d="M7 7h15v13H7z" fill="#b9b7b7"/></svg>
    <svg class="a3" width="30" height="28" viewBox="0 0 30 28"><path d="M8 1h10q-4 0-5 6l-3 14q-1 4-5 3-5-1-4-7L4 6Q5 1 8 1z" fill="url(#gcop1)"/><path d="M22 27H12q4 0 5-6l3-14q1-4 5-3 5 1 4 7l-3 11q-1 5-4 5z" fill="url(#gcop2)"/><path d="M13 1h6q3 0 3 4-3 0-4 4l-1 3h-5z" fill="#2145b8"/></svg>
    <svg class="a4" width="34" height="46" viewBox="0 0 34 46"><path d="M3 15A14.500 14.500 0 0 1 31 16q0 7-8 7-5 0-4-3 3-8-5-9T3 19z" fill="url(#gedge)"/><path d="M3 14Q0 30 17 30q8 0 12-5-13 3-14-8 0-5 3-6-9-4-15 3z" fill="#1667b8"/><circle cx="9" cy="24" r="7" fill="#b4b0ae"/><circle cx="9" cy="21.500" r="2.700" fill="#6d6967"/><path d="M4 28.500q5-7 10 0-5 4-10 0" fill="#6d6967"/><rect x="13" y="38" width="8" height="4" rx="2" fill="#9b8f93"/></svg>
    <svg class="a5" width="28" height="28"><circle cx="14" cy="14" r="13.500" fill="url(#gtel)"/><path d="M5 14l16-7-3 15-5-4-3 3v-5l7-6-9 5z" fill="#fff"/></svg>
    <svg class="a6" width="30" height="32"><path d="M9 7V2h12v5" fill="none" stroke="#38b6e8" stroke-width="2.200"/><rect x=".5" y="6" width="29" height="25" rx="3" fill="#f5f5f5"/><path d="M9 12h5.500v5.500H9z" fill="#f25022"/><path d="M15.500 12H21v5.500h-5.500z" fill="#7fba00"/><path d="M9 18.500h5.500V24H9z" fill="#00a4ef"/><path d="M15.500 18.500H21V24h-5.500z" fill="#ffb900"/></svg>
    <svg class="a7" width="31" height="30"><path d="M0 3q0-2 2-2h9l3 4h14q2 0 2 2v10H0z" fill="#e0a11b"/><path d="M0 8h30v20q0 1-1 1H1q-1 0-1-1z" fill="url(#gfold)"/><path d="M5 29v-5q0-2 2-2h16q2 0 2 2v5z" fill="#1e7fd2"/><path d="M10 24.500h10" stroke="#0d4f93" stroke-width="1.500"/></svg>
    <div class="kicad"><span>Ki</span><em></em></div>
    <svg class="a8" width="32" height="46" viewBox="0 0 32 46"><path d="M7 10l11-9 12 9v18H7z" fill="#1683d8"/><path d="M10 8l8-6 12 8-17 13z" fill="#0f5cb0"/><path d="M30 11L14 23l6 7h8q2 0 2-2z" fill="#50d9ff"/><path d="M7 22h23v6q0 2-2 2H9q-2 0-2-2z" fill="#35b8f1" opacity=".8"/><rect x="0" y="10" width="15" height="15" rx="2" fill="#1066b8"/><circle cx="7.500" cy="17.500" r="3.700" fill="none" stroke="#fff" stroke-width="2"/><rect x="11" y="38" width="8" height="4" rx="2" fill="#9b8f93"/></svg>
  </div>
  <div class="tray">
    <svg width="16" height="10"><path d="M2 8l6-6 6 6" fill="none" stroke="#fff" stroke-width="1.700"/></svg>
    <svg width="16" height="22"><rect x="5" y="1" width="6" height="12" rx="3" fill="none" stroke="#5ecfd0" stroke-width="1.600"/><path d="M1.500 9q0 7 6.500 7t6.500-7M8 16v5" fill="none" stroke="#5ecfd0" stroke-width="1.600"/></svg>
    <div class="lang">ENG<br>IN</div>
    <svg width="20" height="16"><path d="M1 6q9-8 18 0M4 9.500q6-5.500 12 0M7 12.500q3-3 6 0" fill="none" stroke="#fff" stroke-width="1.700"/><circle cx="10" cy="14" r="1.700" fill="#fff"/></svg>
    <svg width="22" height="18"><path d="M1 6.500h3l5-4.500v14l-5-4.500H1z" fill="none" stroke="#fff" stroke-width="1.400"/><path d="M12 6q2 3 0 6M14.500 4q4 5 0 10M17 1.500q6 7.500 0 15" fill="none" stroke="#fff" stroke-width="1.400"/></svg>
    <svg width="22" height="18"><rect x="3" y="4" width="15" height="11" rx="2" fill="none" stroke="#fff" stroke-width="1.600"/><path d="M19 7.500h1.500v4H19zM5 9h6v4.500H5z" fill="#fff"/><path d="M5 0L0 9h4l-1 7 6-9H5z" fill="#fff" stroke="#3a1a18" stroke-width=".8"/></svg>
    <div class="clock">23:16<br>12-04-2025</div>
    <svg width="20" height="22"><path d="M9 4q-5 0-5 6v4l-2 3h15l-2-3v-2M7 19q2 3 5 0" fill="none" stroke="#fff" stroke-width="1.500"/><path d="M12 2h5l-5 6h5M8 8h4l-4 5h4" fill="none" stroke="#fff" stroke-width="1.300"/></svg>
  </div>
</div>
</body>
</html>
```
FILE: styles.css
```css
* { box-sizing: border-box; }
html, body { margin: 0; width: 1920px; height: 1080px; overflow: hidden; }
body {
  display: flex; flex-direction: column; background: #f0f0f0; color: #000;
  font: 14px/20px "Open Sans", "Noto Sans", sans-serif; letter-spacing: -.15px;
}
svg { flex: none; display: block; }
.defs { position: absolute; }
.titlebar { height: 29px; flex: none; background: linear-gradient(90deg, #f3f1f8, #f4f0f6 60%, #f5f0f5); display: flex; align-items: center; padding-left: 2px; }
.apptitle { margin-left: 6px; }
.winbtns { margin-left: auto; display: flex; gap: 46.500px; padding-right: 26px; }
.menubar { height: 23px; flex: none; background: #fff; padding: 3px 0 0 9.500px; display: grid; grid-template-columns: 41px 44px 50px 53px 57px 65px 53px 94px 60px; line-height: 19px; }
.toolbar { flex: none; display: flex; align-items: center; }
.toolbar i { width: 9px; height: 34px; flex: none; background: linear-gradient(#858585, #858585) 4px 0 / 1px 100% no-repeat; }
.main { height: 48px; padding: 0 0 0 5px; }
.main b { width: 41px; display: flex; justify-content: center; }
.main b svg { width: 30px; height: 30px; }
.aux { height: 43px; padding: 0 0 1px 6px; border-bottom: 1px solid #a9a9a9; }
.combo { height: 28px; background: #fdfdfd; border: 1px solid #d0d0d0; border-bottom-color: #b0b0b0; border-radius: 2px; display: flex; align-items: center; padding-left: 3px; flex: none; white-space: nowrap; }
.combo > svg { width: 10px; height: 6px; margin: 0 4px 0 auto; }
.aux .toggle { width: 38px; height: 38px; margin: 0 2px 0 4px; background: #b3d7f3; border: 1px solid #0078d7; display: flex; align-items: center; justify-content: center; }
.aux > i + .combo { margin-left: 2px; margin-right: 2px; }
.aux .layer { height: 26px; border-color: #858585; border-radius: 0; margin-left: 3px; padding-left: 7px; margin-top: -2px; }
.sw { width: 14px; height: 14px; background: #c83434; border: 1px solid #000; margin-right: 6px; }
.aux .pair { margin: 0 5px 0 5px; }
.work { height: 809px; flex: none; display: flex; }
.vbar { width: 45px; padding: 5px 0 0 3px; flex: none; border-bottom: 1px solid #a9a9a9; }
.vbar.left { border-right: 1px solid #a9a9a9; }
.vbar b { display: flex; width: 38px; height: 38px; margin-bottom: 3px; border: 1px solid transparent; align-items: center; justify-content: center; position: relative; }
.vbar b.on { background: #b3d7f3; border-color: #0078d7; }
.vbar b svg { width: 30px; height: 30px; overflow: hidden; }
.vbar i { display: block; width: 34px; height: 9px; margin-left: 2px; background: linear-gradient(#858585, #858585) 0 3px / 100% 1px no-repeat; }
.vbar .more::after { content: ""; position: absolute; right: -1px; bottom: 0; border: 4.500px solid #000; border-top-color: transparent; border-left-color: transparent; }
.ic { font-family: "DejaVu Sans", sans-serif; fill: #545454; letter-spacing: 0; font-weight: 400; }
.canvas { background: #001023; flex: none; }
.grid { stroke: #848484; stroke-width: 1; shape-rendering: crispEdges; }
.grid use, .grid > path { stroke-dasharray: 1 61.700; }
.page { fill: none; stroke: #848484; stroke-width: 1; }
.fr { fill: none; stroke: #c872b0; stroke-width: 1; }
.halo { stroke-width: 3; stroke-opacity: .55; }
.ws { fill: #d47ab6; stroke: #001023; stroke-width: .35; font: 27px "DejaVu Sans Condensed", "DejaVu Sans", sans-serif; letter-spacing: 0; }
.ws .title { font-size: 37px; font-weight: 700; font-style: italic; fill: #c872ab; stroke: none; }
.ws .rev { font-size: 29px; font-weight: 700; fill: #c872ab; stroke: none; }
.ws .sm { font-size: 23px; stroke-width: .2; }
.silk { fill: none; stroke: #f2eda1; }
.lbl, .ref, .fab, .num { font-family: "DejaVu Sans Condensed", "DejaVu Sans", sans-serif; letter-spacing: 0; }
.lbl { fill: #f2eda1; font-size: 9.500px; }
.ref { fill: #f2eda1; font-size: 18px; stroke: #001023; stroke-width: .3; }
.fab { fill: #afafaf; font-size: 19px; }
.num { fill: #f0c0c0; font-size: 15px; text-anchor: middle; }
.vbar.right { width: 50px; border-left: 1px solid #a9a9a9; border-right: 5px solid #dcdcdc; }
.panel { width: 250px; height: 808px; margin-top: -1px; background: #f0f0f0; }
.panel h2 { margin: 0; height: 26px; background: #b9b9b9; font-weight: 400; font-size: 15px; line-height: 25px; padding-left: 3px; letter-spacing: -.15px; }
.tabs { display: flex; align-items: flex-end; height: 32px; font-size: 15px; letter-spacing: -.25px; }
.tabs span { height: 26px; border: 1px solid #e3e3e3; border-bottom: 0; line-height: 27px; padding-left: 4px; width: 61px; }
.tabs span:last-child { width: 58px; padding-left: 5px; }
.tabs .act { height: 28px; width: 63px; background: #f9f9f9; padding-left: 6px; line-height: 27px; }
.tabbody { height: 474px; background: #f9f9f9; border: 1px solid #e5e5e5; border-top: 0; margin-right: 2px; padding: 3px 1px 0 3px; }
.layers { display: flex; height: 440px; background: #f0f0f0; }
ul { list-style: none; margin: 0; padding: 0; width: 221px; }
li { height: 20px; display: flex; align-items: center; padding-left: 19px; font-size: 13px; letter-spacing: -.15px; }
li.sel { background: #e2e2e2; padding-left: 7px; }
li.sel::before { content: ""; border: solid transparent; border-width: 6px 0 6px 6px; border-left-color: #4040ff; margin-right: 6px; }
li s { width: 16px; height: 15px; }
.chk { background-image: conic-gradient(currentColor 25%, transparent 0 50%, currentColor 0 75%, transparent 0); background-size: 11px 10px; }
li svg { width: 16px; height: 16px; margin: 1px 5px 0 6px; }
.scroll { flex: 1; border-left: 1px solid #fff; padding: 21px 0 0 8px; }
.scroll em { display: block; width: 3px; height: 358px; border-radius: 2px; background: #858585; }
.ldo { margin: 4px 5px 0 5px; height: 22px; background: #fff; display: flex; align-items: center; padding-left: 8px; gap: 3px; font-size: 13px; letter-spacing: -.2px; padding-bottom: 3px; }
.panel label { display: block; font-size: 13px; letter-spacing: -.15px; padding: 10px 0 0 6px; height: 31px; }
.panel .vp { height: 24px; padding-top: 3px; }
.wide { width: 236px; margin-left: 7px; }
.dash { letter-spacing: 1px; }
.panel .sf { margin-top: 6px; border-top: 5px solid #dcdcdc; height: 31px; }
.checks { display: grid; grid-template-columns: 105px 1fr; grid-auto-rows: 20px; padding: 5px 0 0 5px; font-size: 13px; letter-spacing: -.2px; }
.checks span { display: flex; align-items: center; }
.checks span::before { content: "✓"; width: 16px; height: 16px; border-radius: 3px; background: #005fb8; color: #fff; margin-right: 3px; font: 11px/16px "DejaVu Sans"; text-align: center; flex: none; }
.checks .off::before { content: ""; background: #f5f5f5; border: 1px solid #666; }
.info { height: 41px; flex: none; padding: 1px 0 0 14px; display: grid; grid-template-columns: 69px 65px 142px 68px 100px; border-bottom: 1px solid #c8c8c8; line-height: 20px; }
.status { height: 28px; flex: none; display: grid; grid-template-columns: 585px 97px 203px 321px 234px 77px 215px 1fr; align-items: center; border-bottom: 1px solid #555; white-space: nowrap; }
.status span { border-right: 1px solid #d5d5d5; padding-left: 4px; height: 23px; line-height: 24px; }
.status .path { padding-left: 2px; letter-spacing: .01px; }
.status span:last-child { border: 0; }
.taskbar { flex: 1; display: flex; align-items: center; color: #fff; background: linear-gradient(90deg, #241e33 0, #251e33 23%, #2c1839 30%, #321b38 38%, #38201f 48%, #36201f 51%, #44131d 57%, #471213 64%, #3e1510 75%, #351a18 90%, #2f1a1f 100%); }
.weather { display: flex; width: 584px; padding-left: 25px; line-height: 20px; align-items: center; flex: none; letter-spacing: .1px; }
.weather svg { margin: -8px 0 0 -1px; }
.weather span { color: #d0ccd4; }
.badge { font: 13px "Open Sans", sans-serif; fill: #222; letter-spacing: 0; }
.apps { display: flex; align-items: center; height: 60px; width: 776px; flex: none; }
.search { width: 273px; height: 40px; margin-left: 17px; border: 1px solid #6d5660; border-radius: 20px; background: linear-gradient(90deg, #4d3850, #543e42); display: flex; align-items: center; padding-left: 13px; font-size: 16px; letter-spacing: .1px; gap: 11px; color: #e6dfe3; flex: none; }
.broom { margin: 0 4px 0 auto; }
.a2 { margin-left: 17px; }
.a3 { margin-left: 24px; }
.a4 { margin: 14px 0 0 22px; }
.a5 { margin-left: 24px; }
.a6 { margin-left: 25px; }
.a7 { margin-left: 25px; }
.kicad { width: 50px; height: 56px; margin-left: 14px; border-radius: 5px; background: #ffffff18; display: flex; flex-direction: column; align-items: center; padding-top: 13px; flex: none; }
.kicad span { width: 29px; height: 29px; border-radius: 5px; background: #2d44c8; font: 700 20px/29px "Open Sans", sans-serif; text-align: center; }
.kicad em { width: 20px; height: 4px; border-radius: 2px; background: #2ee6f5; margin-top: 7px; }
.a8 { margin: 14px 0 0 15px; }
.tray { flex: 1; display: flex; align-items: center; padding-left: 195px; line-height: 20px; }
.tray svg:nth-child(2) { margin-left: 24px; }
.lang { width: 40px; text-align: center; margin-left: 20px; }
.lang + svg { margin-left: 17px; }
.tray svg:nth-child(5) { margin-left: 9px; }
.tray svg:nth-child(6) { margin-left: 8px; }
.clock { width: 97px; text-align: right; letter-spacing: .45px; }
.clock + svg { margin-left: 10px; }
```
